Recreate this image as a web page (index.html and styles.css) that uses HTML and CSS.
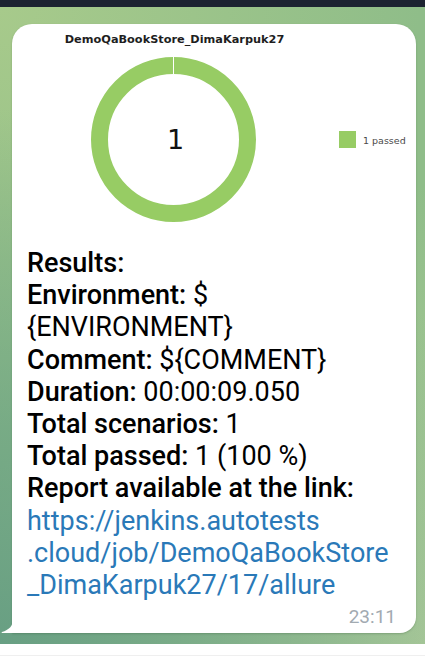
FILE: index.html
```html
<!DOCTYPE html>
<html lang="en">
<head>
<meta charset="utf-8">
<title>Telegram message</title>
<link rel="stylesheet" href="styles.css">
</head>
<body>
<div class="statusbar"></div>
<main class="chat">
  <div class="bubble">
    <svg class="chart" width="404" height="223" viewBox="0 0 404 223">
      <text class="chart-title" x="162.5" y="19" text-anchor="middle">DemoQaBookStore_DimaKarpuk27</text>
      <circle cx="161.5" cy="115.5" r="74" fill="none" stroke="#97cc64" stroke-width="17"/>
      <line x1="161.5" y1="32" x2="161.5" y2="50" stroke="#ffffff" stroke-width="1"/>
      <text class="chart-count" x="163.5" y="125" text-anchor="middle">1</text>
      <rect x="327" y="107" width="17" height="17" fill="#97cc64"/>
      <text class="chart-legend" x="351" y="120">1 passed</text>
    </svg>
    <p class="caption"><strong>Results:</strong><br><strong>Environment:</strong> $<br>{ENVIRONMENT}<br><strong>Comment:</strong> ${COMMENT}<br><strong>Duration:</strong> 00:00:09.050<br><strong>Total scenarios:</strong> 1<br><strong>Total passed:</strong> 1 (100 %)<br><strong>Report available at the link:</strong><br><a class="link" href="#">https://jenkins.autotests<br>.cloud/job/DemoQaBookStore<br>_DimaKarpuk27/17/allure</a></p>
    <div class="meta"><span class="time">23:11</span></div>
    <svg class="tail" width="12" height="14" viewBox="0 0 12 14"><path d="M12 0 C12 7 8 11 1 13 C0.3 13.3 0.6 14 1.5 14 L12 14 Z" fill="#ffffff"/></svg>
  </div>
</main>
<div class="inputbar"><div class="inputline"></div></div>
</body>
</html>
```
FILE: styles.css
```css
* { box-sizing: border-box; }
html, body { margin: 0; padding: 0; }
body {
  width: 425px;
  height: 658px;
  overflow: hidden;
  background: #ffffff;
  font-family: Roboto, "Noto Sans", sans-serif;
}
.statusbar {
  height: 7px;
  background: #1c2331;
}
.chat {
  height: 637px;
  padding: 17px 9px 0 12px;
  background-color: #8fbd89;
  background-image:
    radial-gradient(circle at 0% 100%, #689f83 0, rgba(104,159,131,0) 70%),
    radial-gradient(circle at 100% 100%, #b3cf9c 0, rgba(179,207,156,0) 60%),
    radial-gradient(circle at 0% 0%, #a7ca8b 0, rgba(167,202,139,0) 55%);
}
.bubble {
  position: relative;
  width: 404px;
  background: #ffffff;
  border-radius: 20px 20px 16px 0;
  box-shadow: 0 1px 2px rgba(40, 70, 40, 0.25);
  padding-bottom: 6px;
}
.chart {
  display: block;
}
.chart-title {
  font-family: "DejaVu Sans", sans-serif;
  font-weight: bold;
  font-size: 11.3px;
  fill: #1e1e1e;
}
.chart-count {
  font-family: "DejaVu Sans", sans-serif;
  font-size: 27px;
  fill: #111111;
}
.chart-legend {
  font-family: "DejaVu Sans", sans-serif;
  font-size: 9.5px;
  fill: #4a4a4a;
}
.caption {
  margin: 0;
  padding: 0 6px 0 15px;
  font-size: 27px;
  line-height: 32.2px;
  color: #000000;
  white-space: nowrap;
}
.caption strong {
  font-weight: 500;
}
.link {
  color: #2a79b8;
  text-decoration: none;
}
.meta {
  display: flex;
  justify-content: flex-end;
  margin-top: 6px;
  padding-right: 20px;
}
.time {
  font-size: 19px;
  line-height: 20px;
  color: #a2aab1;
}
.tail {
  position: absolute;
  left: -11px;
  bottom: 0;
  display: block;
}
.inputbar {
  height: 14px;
  background: #ffffff;
  padding-top: 11px;
}
.inputline {
  height: 1px;
  background: #efefef;
}
```
